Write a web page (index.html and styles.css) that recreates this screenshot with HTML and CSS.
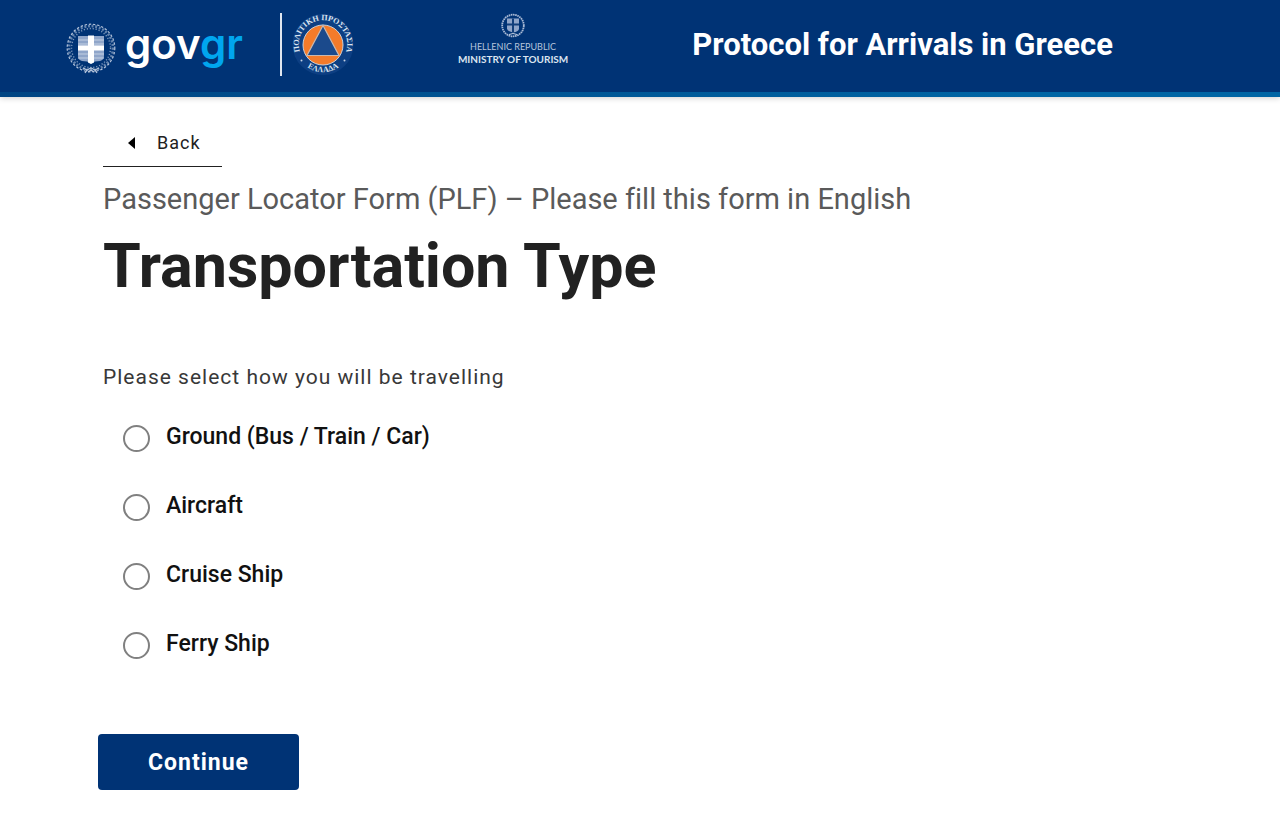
FILE: index.html
```html
<!DOCTYPE html>
<html lang="en">
<head>
    <meta charset="UTF-8">
    <meta name="viewport" content="width=device-width, initial-scale=1">
    <title>Protocol for Arrivals in Greece</title>
    <link rel="stylesheet" href="styles.css">
</head>
<body>
    <!-- shared emblem -->
    <svg class="defs" aria-hidden="true">
        <defs>
            <symbol id="emblem" viewBox="0 0 50 50">
                <g fill="none" stroke="#b4c4db">
                    <circle cx="25" cy="24" r="22" stroke-width="2.6" stroke-dasharray="2 1.7" opacity=".55"/>
                    <circle cx="25" cy="24" r="19.500" stroke-width="1.4" stroke-dasharray="1.2 1.8" opacity=".7"/>
                    <circle cx="25" cy="24" r="23.800" stroke-width="1.2" stroke-dasharray="2.4 1.8"/>
                    <path d="M17 44l4 2-2 3M33 44l-4 2 2 3M21 46l4-2 4 2M22 48l3-2 3 2" stroke-width="1.3"/>
                </g>
                <path d="M12 12h26v20q0 4-4 5l-5 .5-4 2-4-2-5-.5q-4-1-4-5z" fill="#8fa5c9"/>
                <path d="M12 16h26M12 20h26M12 30h26M12 34h26" stroke="#c3d0e3" stroke-width="1"/>
                <path d="M22 11.500h6v10h10v5H28v12l-3 1.500-3-1.500v-12H12v-5h10z" fill="#fff"/>
            </symbol>
            <symbol id="emblem-small" viewBox="0 0 24 24">
                <circle cx="12" cy="12" r="10.800" fill="none" stroke="#a9bad5" stroke-width="1.8" stroke-dasharray="1.6 .6"/>
                <path d="M6 5h12v10q0 3-6 4-6-1-6-4z" fill="#8fa5c9"/>
                <path d="M12 5v14M6 11h12" stroke="#123f7b" stroke-width="2"/>
                <path d="M8 21l4-1 4 1" fill="none" stroke="#c3d0e3"/>
            </symbol>
        </defs>
    </svg>

    <header class="header">
        <a class="brand" href="#" aria-label="gov.gr">
            <svg class="brand-emblem"><use href="#emblem"/></svg>
            <span class="brand-name">gov<span class="brand-gr">gr</span></span>
        </a>
        <a class="civil" href="#" aria-label="Civil Protection">
            <svg class="civil-logo" viewBox="0 0 62 62">
                <defs>
                    <path id="arc-top" d="M8.200 39A24.200 24.200 0 1 1 53.800 39"/>
                    <path id="arc-bottom" d="M7 45A28 28 0 0 0 55 45"/>
                </defs>
                <circle cx="31" cy="31" r="30.500" fill="#0d3f83"/>
                <circle cx="31" cy="31.500" r="20" fill="#f47b2a" stroke="#c9cfd8" stroke-width="1"/>
                <path d="M31 12L47 42H15z" fill="#1b4a8c" stroke="#c9b8ae" stroke-width="1.200"/>
                <text class="civil-text"><textPath href="#arc-top" startOffset="50%" text-anchor="middle">ΠΟΛΙΤΙΚΗ ΠΡΟΣΤΑΣΙΑ</textPath></text>
                <text class="civil-text"><textPath href="#arc-bottom" startOffset="50%" text-anchor="middle">ΕΛΛΑΔΑ</textPath></text>
                <circle cx="9.500" cy="47" r="1" fill="#c3d0e3"/>
                <circle cx="52.500" cy="47" r="1" fill="#c3d0e3"/>
            </svg>
        </a>
        <a class="ministry" href="#">
            <svg class="ministry-emblem"><use href="#emblem-small"/></svg>
            <span class="ministry-top">HELLENIC REPUBLIC</span>
            <span class="ministry-name">MINISTRY OF TOURISM</span>
        </a>
        <div class="site-title">Protocol for Arrivals in Greece</div>
    </header>

    <main class="main">
        <a class="back" href="#"><svg class="back-icon" viewBox="0 0 7 12"><path d="M7 0v12L0 6z"/></svg>Back</a>
        <p class="caption">Passenger Locator Form (PLF) – Please fill this form in English</p>
        <h1>Transportation Type</h1>
        <form>
            <fieldset class="options">
                <legend>Please select how you will be travelling</legend>
                <label class="option"><input type="radio" name="transport" value="ground"><span>Ground (Bus / Train / Car)</span></label>
                <label class="option"><input type="radio" name="transport" value="aircraft"><span>Aircraft</span></label>
                <label class="option"><input type="radio" name="transport" value="cruise"><span>Cruise Ship</span></label>
                <label class="option"><input type="radio" name="transport" value="ferry"><span>Ferry Ship</span></label>
            </fieldset>
            <button class="continue" type="submit">Continue</button>
        </form>
    </main>
</body>
</html>
```
FILE: styles.css
```css
* {
    box-sizing: border-box;
}
body {
    margin: 0;
    font-family: Roboto, "Liberation Sans", sans-serif;
    background: #fff;
    color: #212121;
}
a {
    color: inherit;
    text-decoration: none;
}
.defs {
    position: absolute;
    width: 0;
    height: 0;
}

/* header */
.header {
    display: flex;
    align-items: flex-start;
    padding: 13px 66px 21px;
    background: linear-gradient(90deg, #004482, #0065a4 80%) bottom / 100% 5px no-repeat #003375;
    box-shadow: 0 1px 6px rgba(0, 0, 0, 0.2);
    color: #fff;
}
.brand {
    display: flex;
    align-items: center;
    gap: 9px;
    padding-top: 10px;
}
.brand-emblem {
    width: 50px;
    height: 52px;
}
.brand-name {
    font-family: Inter, sans-serif;
    font-size: 42px;
    font-weight: 600;
    line-height: 40px;
    padding-bottom: 10px;
}
.brand-gr {
    color: #00a6ee;
}
.civil {
    margin-left: 37px;
    padding-left: 10px;
    border-left: 2px solid #dfe6ef;
}
.civil-logo {
    display: block;
    width: 62px;
    height: 63px;
}
.civil-text {
    font-family: "Liberation Serif", serif;
    font-size: 8px;
    font-weight: bold;
    fill: #dbe4f0;
}
.ministry {
    display: flex;
    flex-direction: column;
    align-items: center;
    margin-left: 104px;
    font-family: Lato, sans-serif;
    line-height: 12px;
    white-space: nowrap;
}
.ministry-emblem {
    width: 24px;
    height: 25px;
    margin-bottom: 3px;
}
.ministry-top {
    font-size: 9px;
    color: #b5c5dc;
}
.ministry-name {
    font-size: 10px;
    font-weight: bold;
    color: #dbe4f0;
}
.site-title {
    margin-left: 124px;
    padding-top: 14px;
    font-size: 31px;
    font-weight: bold;
    line-height: 36px;
}

/* page */
.main {
    padding: 24px 103px;
}
.back {
    display: inline-flex;
    align-items: center;
    padding: 10px 21px 11px 25px;
    border-bottom: 1px solid #212121;
    font-size: 18px;
    line-height: 24px;
    letter-spacing: 1px;
}
.back-icon {
    width: 7px;
    height: 12px;
    margin-right: 22px;
    fill: #000;
}
.caption {
    margin: 14px 0 0;
    font-size: 29px;
    line-height: 36px;
    font-variant-ligatures: none;
    color: #5a5a5a;
}
h1 {
    margin: 13px 0 0;
    font-size: 61px;
    line-height: 72px;
}
.options {
    margin: 61px 0 0;
    padding: 0;
    border: 0;
    line-height: 28px;
}
legend {
    padding: 0;
    margin-bottom: 32px;
    font-size: 21px;
    letter-spacing: 1px;
    color: #383838;
}
.option {
    display: flex;
    align-items: center;
    width: fit-content;
    margin: 0 0 38px 20px;
    font-size: 23px;
    font-weight: 500;
    color: #111;
}
.option span {
    padding-bottom: 3px;
}
.option input {
    appearance: none;
    width: 27px;
    height: 27px;
    margin: 0 16px 0 0;
    border: 2px solid #808080;
    border-radius: 50%;
    background: #fff;
}
.option input:checked {
    border: 8px solid #003375;
}
.continue {
    margin: 35px 0 0 -5px;
    padding: 15px 50px 13px;
    border: 0;
    border-radius: 4px;
    background: #003375;
    color: #fff;
    font-family: inherit;
    font-size: 23px;
    font-weight: bold;
    line-height: 28px;
    letter-spacing: 1px;
    cursor: pointer;
}
```
